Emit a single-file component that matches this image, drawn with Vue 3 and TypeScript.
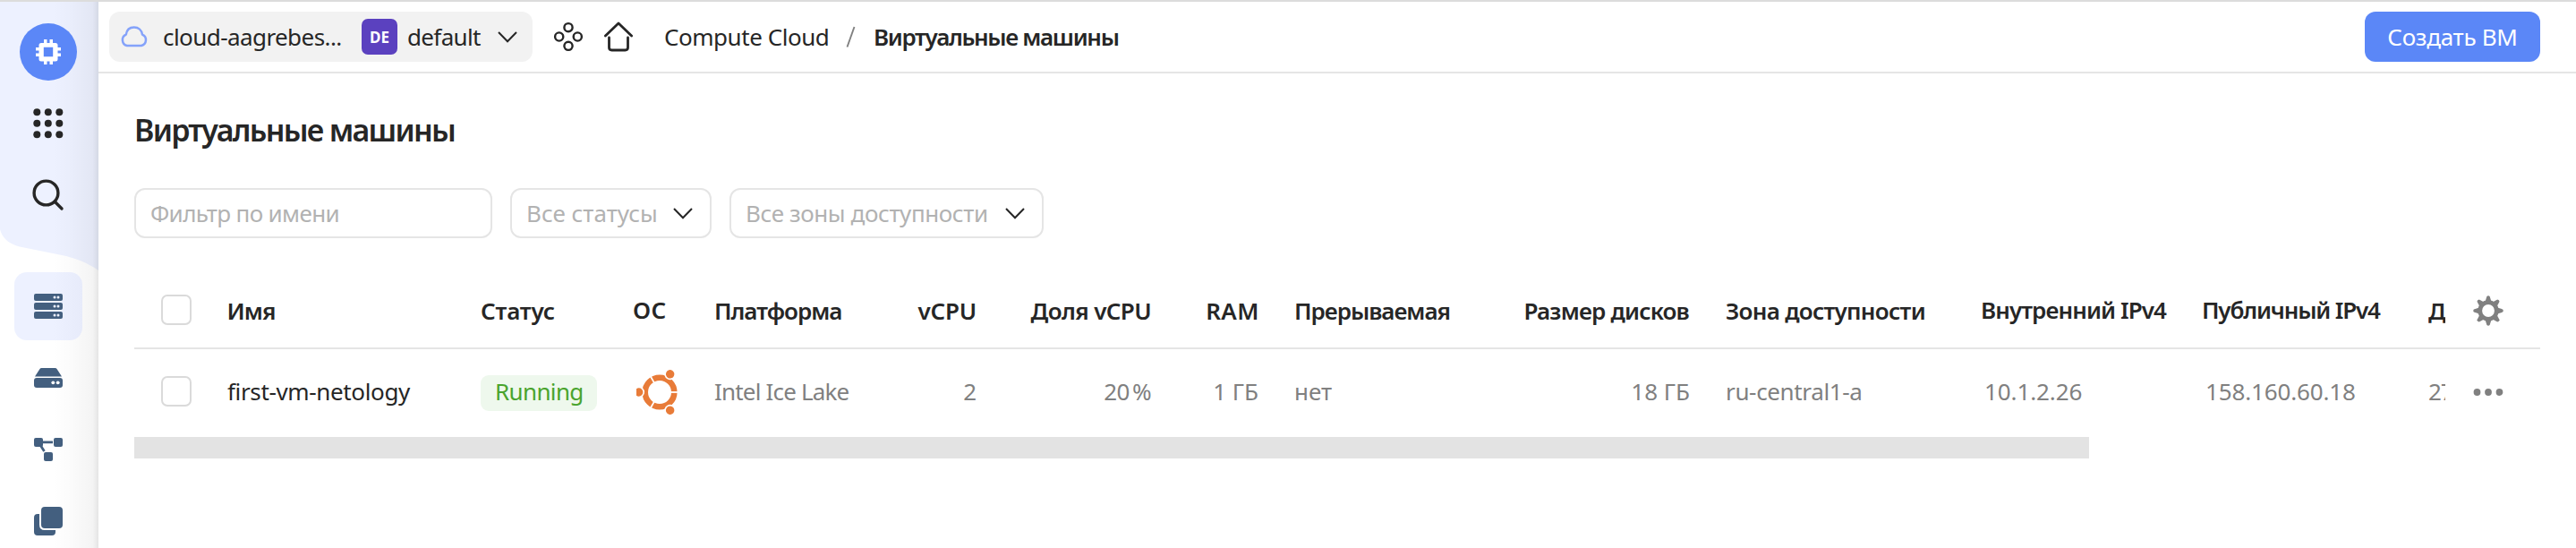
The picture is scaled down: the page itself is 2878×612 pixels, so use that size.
<script setup lang="ts">
interface Column {
  id: string
  title: string
  value?: string
}

const columns: Column[] = [
  { id: 'name', title: 'Имя', value: 'first-vm-netology' },
  { id: 'status', title: 'Статус', value: 'Running' },
  { id: 'os', title: 'ОС' },
  { id: 'platform', title: 'Платформа', value: 'Intel Ice Lake' },
  { id: 'vcpu', title: 'vCPU', value: '2' },
  { id: 'share', title: 'Доля vCPU', value: '20 %' },
  { id: 'ram', title: 'RAM', value: '1 ГБ' },
  { id: 'preempt', title: 'Прерываемая', value: 'нет' },
  { id: 'disks', title: 'Размер дисков', value: '18 ГБ' },
  { id: 'zone', title: 'Зона доступности', value: 'ru-central1-a' },
  { id: 'internal', title: 'Внутренний IPv4', value: '10.1.2.26' },
  { id: 'public', title: 'Публичный IPv4', value: '158.160.60.18' },
  { id: 'created', title: 'Д', value: '27' },
]

const gridDots = [0, 1, 2].flatMap((r) => [0, 1, 2].map((c) => ({ x: 4.3 + c * 12.5, y: 4.3 + r * 12.5 })))
const teeth = [0, 45, 90, 135, 180, 225, 270, 315]
</script>

<template>
  <div class="app">
    <aside class="side">
      <svg class="side-bg" width="110" height="302" viewBox="0 0 110 302">
        <path d="M0 0H110V300C97 291 85 287 74 284L22 273.500C8 270 2 262 0 254Z" fill="#edf1ff" />
      </svg>
      <div class="side-shade"></div>
      <div class="side-items">
        <div class="service">
          <svg width="28" height="28" viewBox="0 0 28 28" fill="#fff">
            <path fill-rule="evenodd" d="M6 4H9V0H12.500V4H15.500V0H19V4H22Q24.500 4 24.500 6.500V9H28V12.500H24.500V15.500H28V19H24.500V22Q24.500 24.500 22 24.500H19V28H15.500V24.500H12.500V28H9V24.500H6Q3.500 24.500 3.500 22V19H0V15.500H3.500V12.500H0V9H3.500V6.500Q3.500 4 6 4ZM8.800 8.800V19.200H19.200V8.800Z" />
          </svg>
        </div>
        <svg class="i-grid" width="34" height="34" viewBox="0 0 34 34" fill="#262626">
          <circle v-for="(d, i) in gridDots" :key="i" :cx="d.x" :cy="d.y" r="4" />
        </svg>
        <svg class="i-search" width="36" height="36" viewBox="0 0 36 36" fill="none" stroke="#262626" stroke-width="3.400" stroke-linecap="round">
          <circle cx="15.500" cy="15.500" r="13.400" />
          <path d="M25.500 25.500L33 33" />
        </svg>
        <div class="tile">
          <svg width="32" height="28" viewBox="0 0 32 28">
            <g v-for="n in 3" :key="n" :transform="`translate(0 ${(n - 1) * 10})`">
              <rect width="32" height="8" rx="2" fill="#435f7f" />
              <circle cx="23" cy="4" r="1.500" fill="#edf1ff" />
              <circle cx="27" cy="4" r="1.500" fill="#edf1ff" />
            </g>
          </svg>
        </div>
        <svg class="i-disk" width="32" height="22" viewBox="0 0 32 22">
          <path d="M1 9.500L6.500 1Q7 0 8.500 0H23.500Q25 0 25.500 1L31 9.500Z" fill="#435f7f" />
          <rect y="11" width="32" height="11" rx="3" fill="#435f7f" />
          <circle cx="21.300" cy="16.300" r="1.900" fill="#fff" />
          <circle cx="26.700" cy="16.300" r="1.900" fill="#fff" />
        </svg>
        <svg class="i-net" width="32" height="26" viewBox="0 0 32 26" fill="#435f7f">
          <rect width="10" height="10" rx="2" />
          <rect x="22" width="10" height="10" rx="2" />
          <rect x="11" y="16" width="10" height="10" rx="2" />
          <path d="M9 4.900H21M7 8L11.500 15" stroke="#435f7f" stroke-width="2.800" />
        </svg>
        <svg class="i-copy" width="32" height="32" viewBox="0 0 32 32" fill="#435f7f">
          <rect x="8" width="24" height="24" rx="4" />
          <path d="M4 8H6V20Q6 26 12 26H24V28Q24 32 20 32H4Q0 32 0 28V12Q0 8 4 8Z" />
        </svg>
      </div>
    </aside>

    <main class="main">
      <header class="bar">
        <div class="picker">
          <svg class="cloud" width="32" height="24" viewBox="0 0 32 24" fill="none" stroke="#84a2fa" stroke-width="2.500" stroke-linejoin="round">
            <path d="M8 22A6.500 6.500 0 0 1 6.800 9.700C7.500 4.500 11 1.500 15.800 1.500S24.300 4.500 25 9.700A6.500 6.500 0 0 1 24 22Z" />
          </svg>
          <span class="t cloud-name">cloud-aagrebes...</span>
          <span class="badge">DE</span>
          <span class="t folder">default</span>
          <svg class="chev" width="22" height="13" viewBox="0 0 22 13"><path d="M1 1L11 11.300L21 1" /></svg>
        </div>
        <svg class="i-four" width="34" height="34" viewBox="0 0 34 34" fill="none" stroke="#262626" stroke-width="2.400">
          <circle cx="17" cy="6.700" r="4.600" />
          <circle cx="6.700" cy="17" r="4.600" />
          <circle cx="27.300" cy="17" r="4.600" />
          <circle cx="17" cy="27.300" r="4.600" />
        </svg>
        <svg class="i-home" width="34" height="34" viewBox="0 0 34 34" fill="none" stroke="#262626" stroke-width="2.800" stroke-linecap="round" stroke-linejoin="round">
          <path d="M2.400 16L17 1.900L31.600 16" />
          <path d="M6.500 18V29Q6.500 32 9.500 32H24.500Q27.500 32 27.500 29V18" />
        </svg>
        <span class="t crumb">Compute Cloud</span>
        <svg class="slash" width="12" height="24" viewBox="0 0 12 24"><path d="M1.500 23.500L9.500 1" stroke="#808080" stroke-width="1.900" /></svg>
        <span class="t current">Виртуальные машины</span>
        <button class="create"><span class="t">Создать ВМ</span></button>
      </header>

      <section class="content">
        <h1>Виртуальные машины</h1>
        <div class="filters">
          <div class="field name-filter"><span class="t">Фильтр по имени</span></div>
          <div class="field status-filter">
            <span class="t">Все статусы</span>
            <svg class="chev" width="22" height="13" viewBox="0 0 22 13"><path d="M1 1L11 11.300L21 1" /></svg>
          </div>
          <div class="field zone-filter">
            <span class="t">Все зоны доступности</span>
            <svg class="chev" width="22" height="13" viewBox="0 0 22 13"><path d="M1 1L11 11.300L21 1" /></svg>
          </div>
        </div>

        <div class="row head">
          <div class="check"><i></i></div>
          <div v-for="c in columns" :key="c.id" class="cell" :class="c.id"><span>{{ c.title }}</span></div>
          <div class="actions">
            <svg width="34" height="34" viewBox="0 0 34 34">
              <g fill="#808080">
                <path v-for="a in teeth" :key="a" d="M13.500 7L15.400 0.900Q17 -0.400 18.600 0.900L20.500 7Z" :transform="`rotate(${a} 17 17)`" />
              </g>
              <circle cx="17" cy="17" r="9.300" fill="none" stroke="#808080" stroke-width="4.800" />
            </svg>
          </div>
        </div>
        <div class="row body">
          <div class="check"><i></i></div>
          <div v-for="c in columns" :key="c.id" class="cell" :class="c.id">
            <svg v-if="c.id === 'os'" width="52" height="52" viewBox="-26 -26 52 52">
              <circle r="16.300" fill="none" stroke="#e87b38" stroke-width="6.600" />
              <g v-for="a in [0, 120, 240]" :key="a" :transform="`rotate(${a})`">
                <path d="M12 0H21" stroke="#fff" stroke-width="1.800" />
                <circle cx="-23.300" r="6.300" fill="#fff" />
                <circle cx="-23.300" r="4.700" fill="#e87b38" />
              </g>
            </svg>
            <span v-else>{{ c.value }}</span>
          </div>
          <div class="actions">
            <svg width="34" height="8" viewBox="0 0 34 8" fill="#808080">
              <circle cx="4.500" cy="4" r="3.900" /><circle cx="17" cy="4" r="3.900" /><circle cx="29.500" cy="4" r="3.900" />
            </svg>
          </div>
        </div>
        <div class="scroll"></div>
      </section>
    </main>
  </div>
</template>

<style>
body { margin: 0; background: #fff; }
</style>

<style scoped>
.app {
  display: flex;
  box-sizing: border-box;
  width: 2878px;
  height: 612px;
  overflow: hidden;
  border-top: 2px solid #dcdcdc;
  background: #fff;
  color: #262626;
  font: 26px/36px "Noto Sans", "Open Sans", sans-serif;
}
svg { display: block; flex: none; }
.t { white-space: nowrap; }

.side { position: relative; flex: none; width: 110px; overflow: hidden; }
.side-bg { position: absolute; left: 0; top: 0; }
.side-shade {
  position: absolute;
  inset: 0;
  background: linear-gradient(to right, rgba(0, 0, 0, 0) 54%, rgba(0, 0, 0, 0.015) 72%, rgba(0, 0, 0, 0.045) 94%, rgba(0, 0, 0, 0.1) 100%);
}
.side-items { position: relative; display: flex; flex-direction: column; align-items: flex-start; padding: 24px 0 0 16px; }
.service {
  display: flex;
  align-items: center;
  justify-content: center;
  width: 64px;
  height: 64px;
  margin-left: 6px;
  border-radius: 50%;
  background: #5b87f7;
}
.i-grid { margin: 31px 0 0 21px; }
.i-search { margin: 45px 0 0 20px; }
.tile {
  display: flex;
  justify-content: center;
  box-sizing: border-box;
  width: 76px;
  height: 76px;
  margin-top: 68px;
  padding-top: 24px;
  border-radius: 14px;
  background: linear-gradient(to right, #edf1ff 58%, #e7ebfa);
}
.i-disk { margin: 31px 0 0 22px; }
.i-net { margin: 56px 0 0 22px; }
.i-copy { margin: 51px 0 0 22px; }

.main { flex: 1; min-width: 0; }
.bar {
  display: flex;
  align-items: center;
  box-sizing: border-box;
  height: 80px;
  padding: 0 40px 0 12px;
  border-bottom: 2px solid #e5e5e5;
}
.picker {
  display: flex;
  align-items: center;
  box-sizing: border-box;
  width: 473px;
  height: 56px;
  padding-left: 12px;
  border-radius: 12px;
  background: #f2f2f2;
}
.cloud-name { width: 222px; margin-left: 16px; letter-spacing: -0.57px; }
.badge {
  width: 40px;
  height: 40px;
  margin-right: 11px;
  border-radius: 7px;
  background: #5b41bf;
  color: #fff;
  font-size: 17px;
  font-weight: 700;
  line-height: 42px;
  text-align: center;
}
.folder { width: 101px; letter-spacing: -0.65px; }
.chev { fill: none; stroke: #262626; stroke-width: 2; }
.i-four { margin-left: 23px; }
.i-home { margin-left: 22px; }
.crumb { margin-left: 34px; width: 203px; letter-spacing: -0.46px; }
.slash { width: 12px; margin-right: 19px; }
.current { font-weight: 600; letter-spacing: -1.33px; }
.create {
  width: 196px;
  height: 56px;
  margin-left: auto;
  padding: 0;
  border: 0;
  border-radius: 12px;
  background: #5b87f7;
  color: #fff;
  font: inherit;
  letter-spacing: -0.3px;
}

.content { padding: 0 40px; }
h1 { margin: 40px 0 41px 0; font-size: 34px; font-weight: 600; line-height: 47px; letter-spacing: -1.72px; }
.filters { display: flex; gap: 20px; color: #b2b2b2; }
.field {
  display: flex;
  align-items: center;
  justify-content: space-between;
  box-sizing: border-box;
  height: 56px;
  padding: 0 19px 0 16px;
  border: 2px solid #e5e5e5;
  border-radius: 12px;
}
.name-filter { width: 400px; letter-spacing: -0.63px; }
.status-filter { width: 225px; letter-spacing: 0; }
.zone-filter { width: 351px; letter-spacing: -0.4px; }

.row {
  display: grid;
  grid-template-columns: 103px 284px 169px 92px 190px 104px 196px 119px 293px 189px 323px 247px 254px 19px 106px;
  align-items: center;
}
.head { margin-top: 36px; height: 86px; border-bottom: 2px solid #e5e5e5; font-weight: 600; }
.body { height: 98px; color: #808080; }
.cell { display: flex; white-space: nowrap; }
.check { padding-left: 30px; }
.check i { display: block; box-sizing: border-box; width: 34px; height: 34px; border: 2px solid #dadada; border-radius: 7px; }
.head .check { padding-top: 2px; }
.body .check { padding-bottom: 4px; }
.head .cell { padding-top: 4px; }
.body .cell { padding-bottom: 4px; }
.actions { padding-left: 31px; }
.head .actions { padding-top: 4px; }
.body .actions { padding-bottom: 2px; }

.name span { letter-spacing: -0.36px; padding-left: 1px; }
.head .name span { letter-spacing: -0.9px; padding-left: 0.500px; }
.body .name { color: #262626; }
.status span { letter-spacing: -0.16px; }
.body .status { padding-bottom: 0; }
.body .status span {
  box-sizing: border-box;
  width: 130px;
  height: 40px;
  padding-left: 16px;
  border-radius: 9px;
  background: #eef8ed;
  color: #4aa42e;
  line-height: 36px;
  letter-spacing: -0.63px;
}
.head .os { padding: 2px 0 0 1px; letter-spacing: 0.5px; }
.body .os { padding: 0 0 2px 5px; }
.platform span { letter-spacing: -0.82px; }
.head .platform span { letter-spacing: -1px; }
.vcpu, .share, .ram, .disks { justify-content: flex-end; }
.head .vcpu { padding-right: 1px; letter-spacing: -0.2px; }
.body .vcpu { padding-right: 1px; }
.share { padding-right: 2px; }
.share span { letter-spacing: -0.6px; }
.body .share span { word-spacing: -3px; }
.head .ram { letter-spacing: 0.5px; }
.body .ram { padding-right: 1px; }
.preempt { padding-left: 39px; }
.head .preempt { letter-spacing: -1px; }
.head .disks { padding-right: 2px; letter-spacing: -0.8px; }
.body .disks { padding-right: 1px; }
.zone { padding-left: 39px; letter-spacing: -0.35px; }
.head .zone { letter-spacing: -0.7px; }
.head .internal { padding: 2px 0 0 1px; letter-spacing: -0.9px; }
.head .public { padding: 2px 0 0 1px; letter-spacing: -1.16px; }
.body .internal, .body .public { padding-left: 5px; }
.body .internal { letter-spacing: -0.1px; }
.body .public { letter-spacing: -0.15px; }
.created { overflow: hidden; min-width: 0; }
.body .created { letter-spacing: -1px; }

.scroll { width: 2184px; height: 24px; background: #e3e3e3; }
</style>
